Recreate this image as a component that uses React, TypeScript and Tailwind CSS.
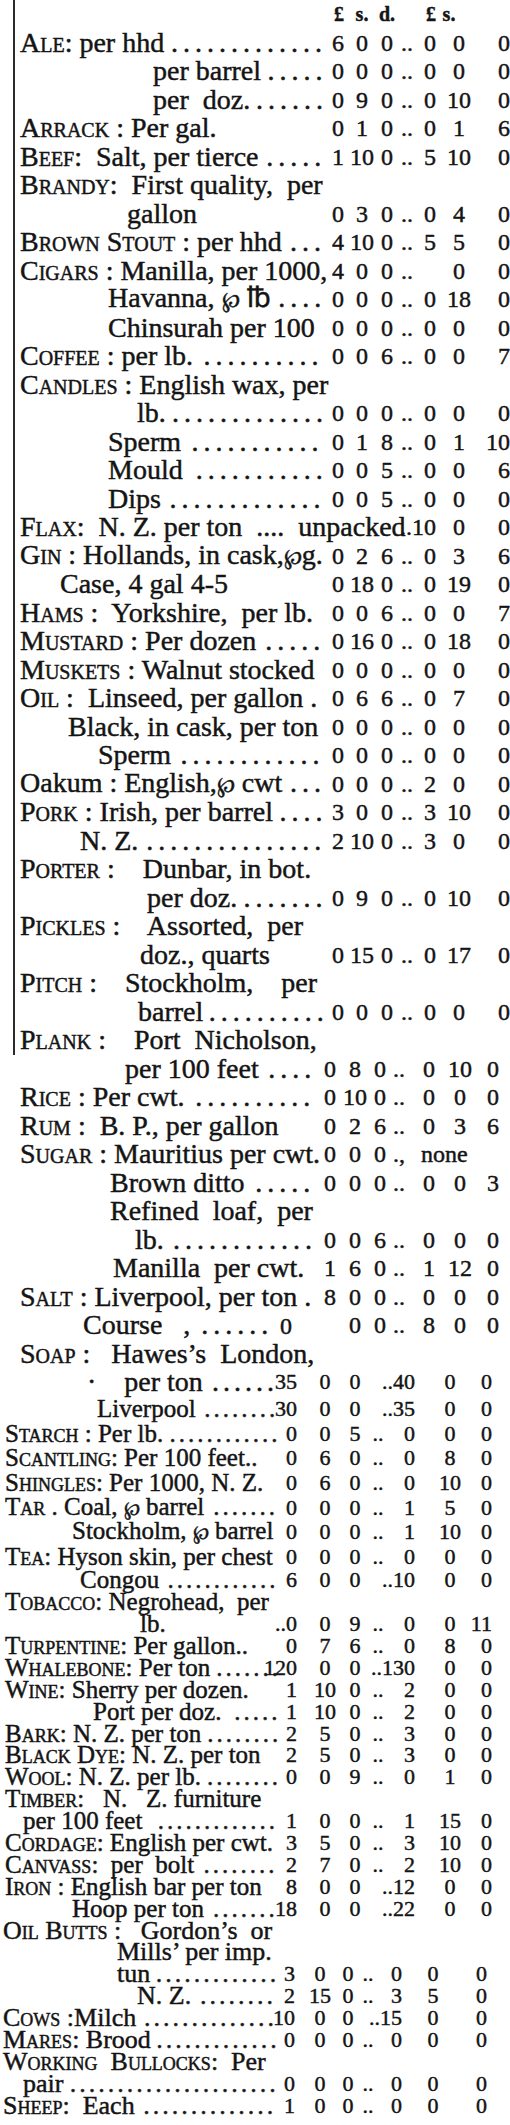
import React, { useLayoutEffect, useRef, useState } from 'react';

type Cell = string | { t: string; a: 's' | 'c' | 'e' };
type Row = {
  c: 'H' | 'A' | 'B' | 'C' | 'C2' | 'D';
  ind?: string;
  hd?: string;
  tx?: React.ReactNode;
  dots?: boolean;
  tail?: string;
  v?: Cell[];
};

const LABEL: Record<string, string> = {
  H: 'w-[310px]',
  A: 'w-[310px]',
  B: 'w-[302px]',
  C: 'w-[278px]',
  C2: 'w-[263px]',
  D: 'w-[278px]',
};

const ML: Record<string, string[]> = {
  H: ['', 'ml-[11px]', 'ml-[11px]', 'ml-[6px]', 'ml-[8px]', 'ml-[6px]', 'ml-[30px]'],
  A: ['', 'ml-[11px]', 'ml-[11px]', 'ml-[6px]', 'ml-[8px]', 'ml-[16px]', 'ml-[30px]'],
  B: ['', 'ml-[12px]', 'ml-[11px]', 'ml-[5px]', 'ml-[15px]', 'ml-[18px]', 'ml-[18px]'],
  C: ['', 'ml-[21px]', 'ml-[16px]', 'ml-[9px]', 'ml-[16px]', 'ml-[28px]', 'ml-[21px]'],
  C2: ['', 'ml-[21px]', 'ml-[16px]', 'ml-[9px]', 'ml-[16px]', 'ml-[28px]', 'ml-[21px]'],
  D: ['', 'ml-[18px]', 'ml-[14px]', 'ml-[6px]', 'ml-[13px]', 'ml-[24px]', 'ml-[33px]'],
};

const NUM: Record<string, string> = {
  H: 'text-[24px]',
  A: 'text-[24px]',
  B: 'text-[24px]',
  C: 'text-[22px]',
  C2: 'text-[22px]',
  D: 'text-[22px]',
};

const TRACK: Record<string, string> = {
  H: 'tracking-[5px]',
  A: 'tracking-[5px]',
  B: 'tracking-[5px]',
  C: 'tracking-[3px]',
  C2: 'tracking-[4px]',
  D: 'tracking-[3px]',
};

const ALIGN: ('s' | 'c' | 'e')[] = ['e', 'c', 'c', 'c', 'e', 'c', 'e'];
const JC = { s: 'justify-start', c: 'justify-center', e: 'justify-end' };
const Z = ['0', '0', '0', '..', '0', '0', '0'];

const Per = () => <span className="text-[0.78em]">{'\u2118'}</span>;

function Leader({ track }: { track: string }) {
  const box = useRef<HTMLSpanElement>(null);
  const unit = useRef<HTMLSpanElement>(null);
  const [n, setN] = useState(0);
  useLayoutEffect(() => {
    if (box.current && unit.current) {
      const w = box.current.getBoundingClientRect().width;
      const u = unit.current.getBoundingClientRect().width;
      if (u > 0) setN(Math.max(1, Math.floor(w / u)));
    }
  }, []);
  return (
    <span ref={box} className="ml-[5px] mr-[1px] flex-1 min-w-0 flex justify-center">
      {n === 0 ? (
        <span ref={unit} className={track}>
          .
        </span>
      ) : (
        <span className={track}>{'.'.repeat(n)}</span>
      )}
    </span>
  );
}

const A: Row[] = [
  { c: 'A', hd: 'Ale', tx: ': per hhd', dots: true, v: ['6', '0', '0', '..', '0', '0', '0'] },
  { c: 'A', ind: 'pl-[133px]', tx: 'per barrel', dots: true, v: Z },
  { c: 'A', ind: 'pl-[133px]', tx: 'per  doz.', dots: true, v: ['0', '9', '0', '..', '0', '10', '0'] },
  { c: 'A', hd: 'Arrack', tx: ' : Per gal.', v: ['0', '1', '0', '..', '0', '1', '6'] },
  { c: 'A', hd: 'Beef', tx: ':  Salt, per tierce', dots: true, v: ['1', '10', '0', '..', '5', '10', '0'] },
  { c: 'A', hd: 'Brandy', tx: ':  First quality,  per' },
  { c: 'A', ind: 'pl-[107px]', tx: 'gallon', v: ['0', '3', '0', '..', '0', '4', '0'] },
  { c: 'A', hd: 'Brown Stout', tx: ' : per hhd', dots: true, v: ['4', '10', '0', '..', '5', '5', '0'] },
  { c: 'A', hd: 'Cigars', tx: ' : Manilla, per 1000,', v: ['4', '0', '0', '..', '', '0', '0'] },
  { c: 'A', ind: 'pl-[88px]', tx: <>Havanna, <Per /> {'\u2114'}</>, dots: true, v: ['0', '0', '0', '..', '0', '18', '0'] },
  { c: 'A', ind: 'pl-[88px]', tx: 'Chinsurah per 100', v: Z },
  { c: 'A', hd: 'Coffee', tx: ' : per lb.', dots: true, v: ['0', '0', '6', '..', '0', '0', '7'] },
  { c: 'A', hd: 'Candles', tx: ' : English wax, per' },
  { c: 'A', ind: 'pl-[117px]', tx: 'lb.', dots: true, v: Z },
  { c: 'A', ind: 'pl-[88px]', tx: 'Sperm', dots: true, v: ['0', '1', '8', '..', '0', '1', '10'] },
  { c: 'A', ind: 'pl-[88px]', tx: 'Mould ', dots: true, v: ['0', '0', '5', '..', '0', '0', '6'] },
  { c: 'A', ind: 'pl-[88px]', tx: 'Dips', dots: true, v: ['0', '0', '5', '..', '0', '0', '0'] },
  { c: 'A', hd: 'Flax', tx: ':  N. Z. per ton  ....  unpacked', v: ['', '', '', '', '..10', '0', '0'] },
  { c: 'A', hd: 'Gin', tx: <> : Hollands, in cask,<Per />g.</>, v: ['0', '2', '6', '..', '0', '3', '6'] },
  { c: 'A', ind: 'pl-[40px]', tx: 'Case, 4 gal 4-5', v: ['0', '18', '0', '..', '0', '19', '0'] },
  { c: 'A', hd: 'Hams', tx: ' :  Yorkshire,  per lb.', v: ['0', '0', '6', '..', '0', '0', '7'] },
  { c: 'A', hd: 'Mustard', tx: ' : Per dozen', dots: true, v: ['0', '16', '0', '..', '0', '18', '0'] },
  { c: 'A', hd: 'Muskets', tx: ' : Walnut stocked', v: Z },
  { c: 'A', hd: 'Oil', tx: ' :  Linseed, per gallon .', v: ['0', '6', '6', '..', '0', '7', '0'] },
  { c: 'A', ind: 'pl-[48px]', tx: 'Black, in cask, per ton', v: Z },
  { c: 'A', ind: 'pl-[78px]', tx: 'Sperm', dots: true, v: Z },
  { c: 'A', tx: <>Oakum : English,<Per /> cwt</>, dots: true, v: ['0', '0', '0', '..', '2', '0', '0'] },
  { c: 'A', hd: 'Pork', tx: ' : Irish, per barrel', dots: true, v: ['3', '0', '0', '..', '3', '10', '0'] },
  { c: 'A', ind: 'pl-[60px]', tx: 'N. Z.', dots: true, v: ['2', '10', '0', '..', '3', '0', '0'] },
  { c: 'A', hd: 'Porter', tx: ' :    Dunbar, in bot.' },
  { c: 'A', ind: 'pl-[127px]', tx: 'per doz.', dots: true, v: ['0', '9', '0', '..', '0', '10', '0'] },
  { c: 'A', hd: 'Pickles', tx: ' :    Assorted,  per' },
  { c: 'A', ind: 'pl-[120px]', tx: 'doz., quarts', v: ['0', '15', '0', '..', '0', '17', '0'] },
  { c: 'A', hd: 'Pitch', tx: ' :    Stockholm,    per' },
  { c: 'A', ind: 'pl-[118px]', tx: 'barrel', dots: true, v: Z },
  { c: 'A', hd: 'Plank', tx: ' :    Port  Nicholson,' },
];

const B: Row[] = [
  { c: 'B', ind: 'pl-[105px]', tx: 'per 100 feet', dots: true, v: ['0', '8', '0', '..', '0', '10', '0'] },
  { c: 'B', hd: 'Rice', tx: ' : Per cwt.', dots: true, v: ['0', '10', '0', '..', '0', '0', '0'] },
  { c: 'B', hd: 'Rum', tx: ' :  B. P., per gallon', v: ['0', '2', '6', '..', '0', '3', '6'] },
  { c: 'B', hd: 'Sugar', tx: ' : Mauritius per cwt.', v: ['0', '0', '0', '.,', { t: 'none', a: 's' }, '', ''] },
  { c: 'B', ind: 'pl-[90px]', tx: 'Brown ditto', dots: true, v: ['0', '0', '0', '..', '0', '0', '3'] },
  { c: 'B', ind: 'pl-[90px]', tx: 'Refined  loaf,  per' },
  { c: 'B', ind: 'pl-[115px]', tx: 'lb.', dots: true, v: ['0', '0', '6', '..', '0', '0', '0'] },
  { c: 'B', ind: 'pl-[93px]', tx: 'Manilla  per cwt.', v: ['1', '6', '0', '..', '1', '12', '0'] },
  { c: 'B', hd: 'Salt', tx: ' : Liverpool, per ton .', v: ['8', '0', '0', '..', '0', '0', '0'] },
  { c: 'B', ind: 'pl-[63px]', tx: 'Course   ,', dots: true, tail: '0', v: ['', '0', '0', '..', '8', '0', '0'] },
  { c: 'B', hd: 'Soap', tx: ' :   Hawes\u2019s  London,' },
  { c: 'C2', ind: 'pl-[67px]', tx: '\u00b7\u2003per ton', dots: true, v: ['35', '0', '0', '', '..40', '0', '0'] },
];

const C1: Row[] = [
  { c: 'C', ind: 'pl-[92px]', tx: 'Liverpool', dots: true, v: ['30', '0', '0', '', '..35', '0', '0'] },
  { c: 'C', hd: 'Starch', tx: ' : Per lb.', dots: true, v: ['0', '0', '5', '..', '0', '0', '0'] },
  { c: 'C', hd: 'Scantling', tx: ': Per 100 feet..', v: ['0', '6', '0', '..', '0', '8', '0'] },
  { c: 'C', hd: 'Shingles', tx: ': Per 1000, N. Z.', v: ['0', '6', '0', '..', '0', '10', '0'] },
  { c: 'C', hd: 'Tar', tx: <> . Coal, <Per /> barrel</>, dots: true, v: ['0', '0', '0', '..', '1', '5', '0'] },
  { c: 'C', ind: 'pl-[67px]', tx: <>Stockholm, <Per /> barrel</>, v: ['0', '0', '0', '..', '1', '10', '0'] },
  { c: 'C', hd: 'Tea', tx: ': Hyson skin, per chest', v: Z },
];

const C2: Row[] = [
  { c: 'C', ind: 'pl-[75px]', tx: 'Congou', dots: true, v: ['6', '0', '0', '', '..10', '0', '0'] },
  { c: 'C', hd: 'Tobacco', tx: ': Negrohead,  per' },
  { c: 'C', ind: 'pl-[135px]', tx: 'lb.', v: ['..0', '0', '9', '..', '0', '0', '11'] },
  { c: 'C', hd: 'Turpentine', tx: ': Per gallon..', v: ['0', '7', '6', '..', '0', '8', '0'] },
  { c: 'C', hd: 'Whalebone', tx: ': Per ton', dots: true, v: ['120', '0', '0', '', '..130', '0', '0'] },
  { c: 'C', hd: 'Wine', tx: ': Sherry per dozen.', v: ['1', '10', '0', '..', '2', '0', '0'] },
  { c: 'C', ind: 'pl-[88px]', tx: 'Port per doz. ', dots: true, v: ['1', '10', '0', '..', '2', '0', '0'] },
  { c: 'C', hd: 'Bark', tx: ': N. Z. per ton', dots: true, v: ['2', '5', '0', '..', '3', '0', '0'] },
  { c: 'C', hd: 'Black Dye', tx: ': N. Z. per ton', v: ['2', '5', '0', '..', '3', '0', '0'] },
  { c: 'C', hd: 'Wool', tx: ': N. Z. per lb.', dots: true, v: ['0', '0', '9', '..', '0', '1', '0'] },
  { c: 'C', hd: 'Timber', tx: ':   N.   Z. furniture' },
  { c: 'C', ind: 'pl-[18px]', tx: 'per 100 feet ', dots: true, v: ['1', '0', '0', '..', '1', '15', '0'] },
  { c: 'C', hd: 'Cordage', tx: ': English per cwt.', v: ['3', '5', '0', '..', '3', '10', '0'] },
  { c: 'C', hd: 'Canvass', tx: ':  per  bolt', dots: true, v: ['2', '7', '0', '..', '2', '10', '0'] },
  { c: 'C', hd: 'Iron', tx: ' : English bar per ton', v: ['8', '0', '0', '', '..12', '0', '0'] },
  { c: 'C', ind: 'pl-[67px]', tx: 'Hoop per ton', dots: true, v: ['18', '0', '0', '', '..22', '0', '0'] },
];

const D: Row[] = [
  { c: 'D', hd: 'Oil Butts', tx: ' :   Gordon\u2019s  or' },
  { c: 'D', ind: 'pl-[114px]', tx: 'Mills\u2019 per imp.' },
  { c: 'D', ind: 'pl-[114px]', tx: 'tun', dots: true, v: ['3', '0', '0', '..', '0', '0', '0'] },
  { c: 'D', ind: 'pl-[134px]', tx: 'N. Z.', dots: true, v: ['2', '15', '0', '..', '3', '5', '0'] },
  { c: 'D', hd: 'Cows', tx: ' :Milch', dots: true, v: ['10', '0', '0', '', '..15', '0', '0'] },
  { c: 'D', hd: 'Mares', tx: ': Brood', dots: true, v: Z },
  { c: 'D', hd: 'Working  Bullocks', tx: ':  Per' },
  { c: 'D', ind: 'pl-[20px]', tx: 'pair', dots: true, v: Z },
  { c: 'D', hd: 'Sheep', tx: ':  Each', dots: true, v: ['1', '0', '0', '..', '0', '0', '0'] },
];

function Line({ r, h }: { r: Row; h: string }) {
  const v = r.v ?? [];
  return (
    <div className={`flex items-center ${h} whitespace-nowrap`}>
      <div className={`${LABEL[r.c]} shrink-0 flex items-baseline ${r.ind ?? ''}`}>
        {r.hd && <span className="whitespace-pre [font-variant:small-caps]">{r.hd}</span>}
        {r.tx && <span className="whitespace-pre">{r.tx}</span>}
        {r.dots && <Leader track={TRACK[r.c]} />}
        {r.tail && <span className={`mr-[30px] ${NUM[r.c]}`}>{r.tail}</span>}
      </div>
      {v.length > 0 && (
        <div className={`flex items-center ${NUM[r.c]}`}>
          {ML[r.c].map((m, i) => {
            const cell = v[i] ?? '';
            const t = typeof cell === 'string' ? cell : cell.t;
            const a = typeof cell === 'string' ? ALIGN[i] : cell.a;
            return (
              <div key={i} className={`w-[14px] shrink-0 flex ${m} ${JC[a]}`}>
                {t}
              </div>
            );
          })}
        </div>
      )}
    </div>
  );
}

function Header() {
  const cells = ['\u00a3', 's.', 'd.', '', '\u00a3', 's.', ''];
  return (
    <div className="flex items-center h-[28.5px] whitespace-nowrap font-bold text-[20px]">
      <div className="w-[310px] shrink-0" />
      {ML.H.map((m, i) => (
        <div key={i} className={`w-[14px] shrink-0 flex ${m} ${JC[ALIGN[i]]}`}>
          {cells[i]}
        </div>
      ))}
    </div>
  );
}

export default function App() {
  return (
    <div className="w-[510px] h-[2125px] overflow-hidden bg-white text-[#141414] font-['Liberation_Serif','DejaVu_Serif',serif] leading-[22px] [-webkit-text-stroke:0.45px_#141414]">
      <div className="ml-[13px] border-l-2 border-[#2a2a2a] pl-[5px] text-[28px]">
        <Header />
        {A.map((r, i) => (
          <Line key={i} r={r} h="h-[28.5px]" />
        ))}
      </div>
      <div className="pl-[20px] text-[28px]">
        {B.map((r, i) => (
          <Line key={i} r={r} h="h-[28.5px]" />
        ))}
      </div>
      <div className="pl-[5px] text-[25px]">
        {C1.map((r, i) => (
          <Line key={i} r={r} h="h-[24.7px]" />
        ))}
        {C2.map((r, i) => (
          <Line key={i} r={r} h="h-[21.9px]" />
        ))}
      </div>
      <div className="pl-[3px] text-[26px]">
        {D.map((r, i) => (
          <Line key={i} r={r} h="h-[21.9px]" />
        ))}
      </div>
    </div>
  );
}
